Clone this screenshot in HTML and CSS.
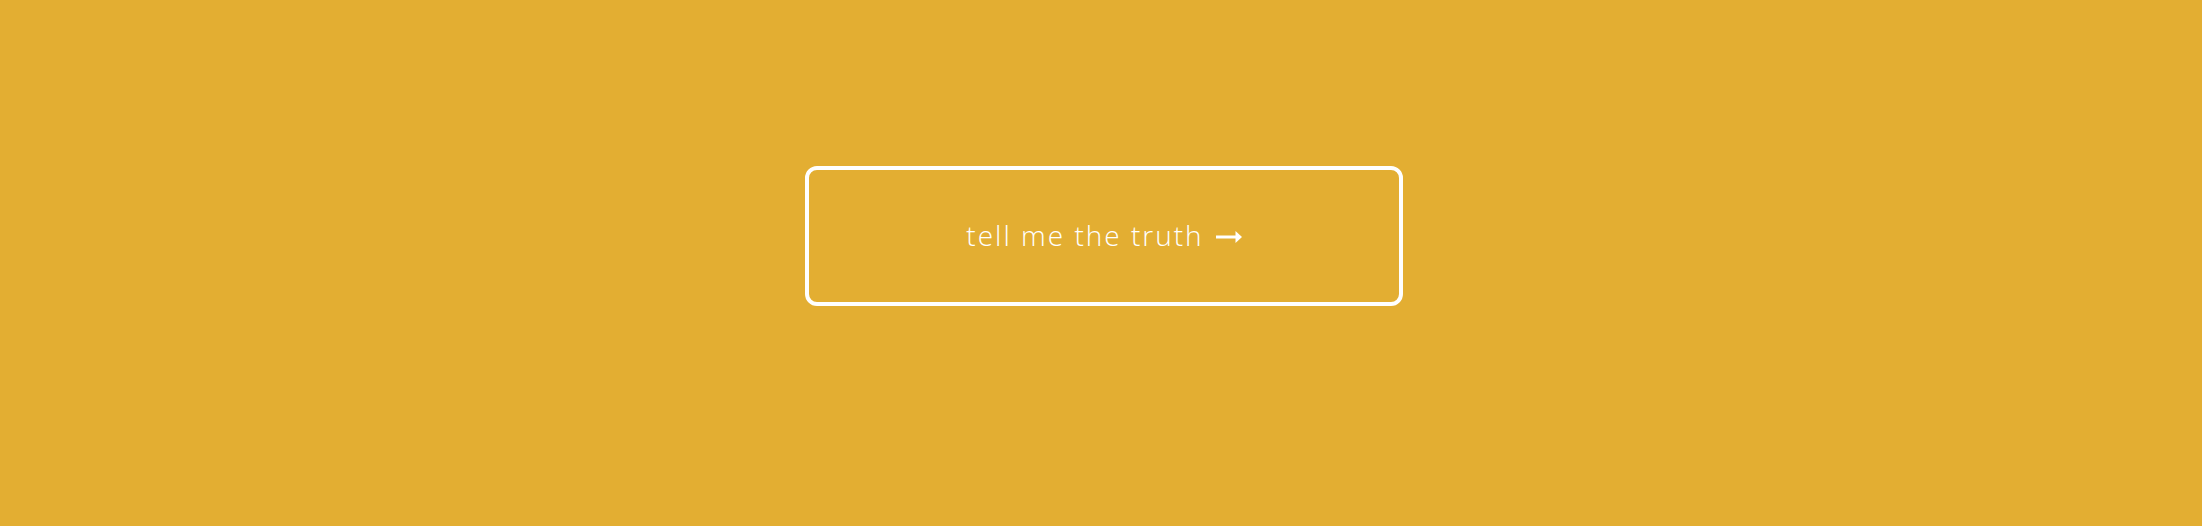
FILE: index.html
```html
<!DOCTYPE html>
<html>
<head>
<meta charset="utf-8">
<link rel="stylesheet" href="styles.css">
</head>
<body>
<main class="stage">
  <a class="truth-button" href="#">
    <span class="label">tell me the truth</span>
    <svg class="arrow" width="26" height="12" viewBox="0 0 26 12" aria-hidden="true">
      <rect x="0" y="4.5" width="21" height="3" fill="#fff"/>
      <path d="M19.5 0 L26 6 L19.5 12 Z" fill="#fff"/>
    </svg>
  </a>
</main>
</body>
</html>
```

FILE: styles.css
```css
html, body {
  margin: 0;
  padding: 0;
  background: #e3ae32;
}

.stage {
  height: 526px;
  box-sizing: border-box;
  display: flex;
  justify-content: center;
  align-items: flex-start;
  padding-top: 166px;
  padding-left: 6px;
}

.truth-button {
  box-sizing: border-box;
  width: 598px;
  height: 140px;
  border: 4px solid #fff;
  border-radius: 12px;
  display: flex;
  align-items: center;
  justify-content: center;
  gap: 12px;
  color: #fff;
  text-decoration: none;
  font-family: "Open Sans", "Liberation Sans", sans-serif;
  font-weight: 300;
  font-size: 28px;
  letter-spacing: 2px;
}

.label {
  line-height: 1;
  padding-bottom: 3px;
}

.arrow {
  display: block;
  margin-top: 1px;
}
```
